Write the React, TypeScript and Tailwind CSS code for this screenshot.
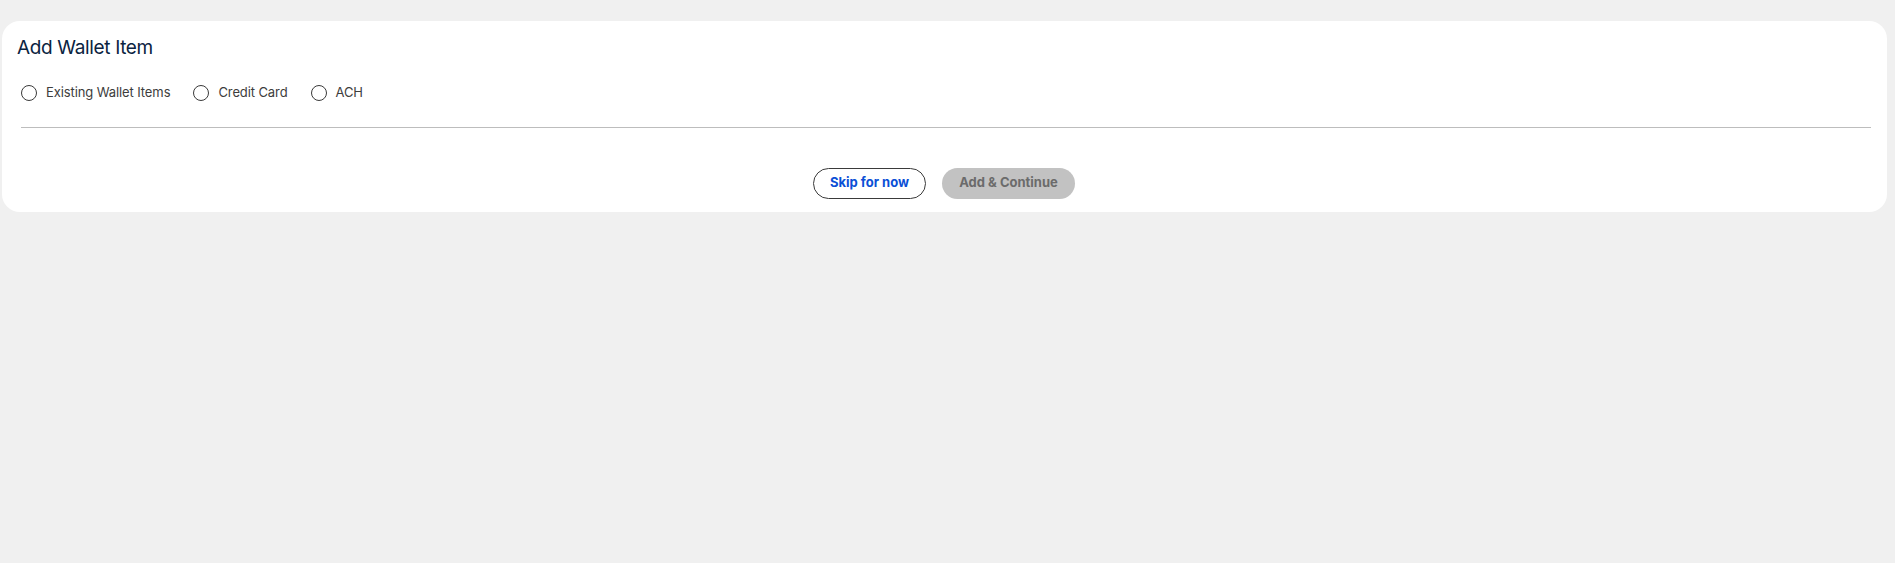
import { useState } from 'react';

const options = ['Existing Wallet Items', 'Credit Card', 'ACH'];

export default function App() {
  const [selected, setSelected] = useState<string | null>(null);

  return (
    <div className="min-h-[563px] bg-[#f0f0f0] pt-[21px] pl-[2px] pr-[8px] font-['Inter',sans-serif]">
      <div className="bg-white rounded-[18px] pl-[15px] pr-[16px] pt-[13px] pb-[13px]">
        <h1 className="text-[19px] leading-[28px] text-[#0b2341] tracking-[-0.35px]">Add Wallet Item</h1>

        {/* Wallet type */}
        <div className="flex items-center gap-[23px] mt-[21px] pl-[4px]">
          {options.map((opt) => (
            <label key={opt} className="flex items-center gap-[9px] cursor-pointer" onClick={() => setSelected(opt)}>
              <span className="w-[16px] h-[16px] rounded-full border border-[#3a3a3a] flex items-center justify-center">
                {selected === opt && <span className="w-[8px] h-[8px] rounded-full bg-[#0b2341]" />}
              </span>
              <span className="text-[13px] text-[#3d3d3d] tracking-[-0.1px]">{opt}</span>
            </label>
          ))}
        </div>

        <div className="h-px bg-[#bdbdbd] mt-[24px] ml-[4px]" />

        <div className="flex justify-center gap-[16px] mt-[40px]">
          <button className="h-[31px] w-[113px] rounded-full border border-[#3a3a3a] text-[13px] font-bold text-[#0a4fd6]">
            Skip for now
          </button>
          <button disabled className="h-[31px] w-[133px] rounded-full bg-[#c2c2c2] text-[13px] font-bold text-[#6b6b6b]">
            Add &amp; Continue
          </button>
        </div>
      </div>
    </div>
  );
}
